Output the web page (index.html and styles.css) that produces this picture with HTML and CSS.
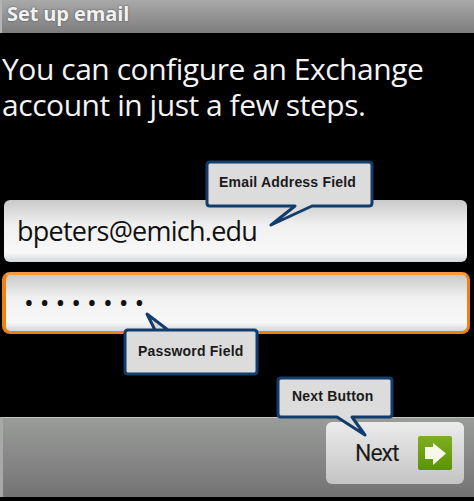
FILE: index.html
```html
<!DOCTYPE html>
<html lang="en">
<head>
    <meta charset="UTF-8">
    <meta name="viewport" content="width=device-width, initial-scale=1.0">
    <title>Set up email</title>
    <link rel="stylesheet" href="styles.css">
</head>
<body>
    <div class="screen">
        <div class="title_bar">Set up email</div>

        <p class="message">You can configure an Exchange account in just a few steps.</p>

        <div class="fields">
            <div class="field field_email">bpeters@emich.edu</div>
            <div class="field field_password">••••••••</div>
        </div>

        <div class="bottom_bar">
            <div class="next_button">
                <span class="next_label">Next</span>
                <span class="next_icon">
                    <svg width="34" height="34" viewBox="0 0 34 34">
                        <path d="M7 11H15V7L28 17.5L15 29V23H7Z" fill="#f6f8ec"/>
                    </svg>
                </span>
            </div>
        </div>

        <!-- callouts sit on top of everything -->
        <svg class="callouts" width="474" height="501" viewBox="0 0 474 501">
            <path class="bubble" d="M210 162H369Q372 162 372 165V203Q372 206 369 206H312L271 225L295 206H210Q207 206 207 203V165Q207 162 210 162Z"/>
            <text class="bubble_text" x="219" y="187">Email Address Field</text>

            <path class="bubble" d="M128 330H254Q257 330 257 333V371Q257 374 254 374H128Q125 374 125 371V333Q125 330 128 330H155L147 314L168 330Z"/>
            <text class="bubble_text" x="138" y="356">Password Field</text>

            <path class="bubble" d="M281 378H389Q392 378 392 381V414Q392 417 389 417H352L365 435L337 417H281Q278 417 278 414V381Q278 378 281 378Z"/>
            <text class="bubble_text" x="292" y="401">Next Button</text>
        </svg>
    </div>
</body>
</html>
```

FILE: styles.css
```css
*{
    margin: 0;
    padding: 0;
    box-sizing: border-box;
}
body{
    background-color: #000;
    font-family: "Open Sans", "Noto Sans", sans-serif;
}
.screen{
    position: relative;
    width: 474px;
    height: 501px;
    overflow: hidden;
    background-color: #000;
}
.title_bar{
    height: 33px;
    padding: 0 5px;
    background: linear-gradient(#a9a9a9, #7d7d7d);
    border-left: 2px solid #b5b5b5;
    color: #f2f2f2;
    font-size: 20px;
    font-weight: 700;
    line-height: 28px;
    letter-spacing: -0.1px;
    text-shadow: 0 0 2px #444;
}
.message{
    height: 167px;
    padding: 18px 2px 0;
    color: #f4f4f4;
    font-size: 30px;
    letter-spacing: -0.45px;
    line-height: 36px;
}
.fields{
    display: flex;
    flex-direction: column;
    gap: 10px;
    padding: 0 4px 0 2px;
}
.field{
    height: 62px;
    margin-left: 2px;
    margin-right: 3px;
    padding-left: 13px;
    border-radius: 6px;
    background: linear-gradient(#c9c9c9, #f0f0f0 40%, #f8f8f8 85%, #d2d8dc);
    color: #111;
    font-size: 27px;
    letter-spacing: -0.75px;
    line-height: 62px;
}
.field_password{
    height: 62px;
    margin-left: 0;
    margin-right: 0;
    padding-left: 18px;
    border: 3px solid #f08010;
    border-left-width: 4px;
    border-top-color: #f49a3c;
    border-radius: 8px;
    font-size: 26px;
    letter-spacing: 6px;
    line-height: 54px;
}
.bottom_bar{
    position: absolute;
    left: 0;
    right: 0;
    top: 417px;
    height: 80px;
    display: flex;
    justify-content: flex-end;
    padding: 4px 10px 0 0;
    background: linear-gradient(#9a9c9a, #737373);
    border-top: 1px solid #c4c4c4;
    border-left: 3px solid #a8a8a8;
}
.next_button{
    width: 138px;
    height: 62px;
    display: flex;
    align-items: center;
    padding: 0 12px 0 29px;
    justify-content: space-between;
    border-radius: 6px;
    background: linear-gradient(#ebebeb, #c4c4c4);
    color: #1c1c1c;
    font-family: Roboto, sans-serif;
    font-size: 23px;
    letter-spacing: -1px;
}
.next_icon{
    width: 34px;
    height: 34px;
    display: block;
    border-radius: 2px;
    background: linear-gradient(#7fae22, #5a9400);
}
.next_icon svg{
    display: block;
}
.callouts{
    position: absolute;
    top: 0;
    left: 0;
}
.bubble{
    fill: #dcdcdc;
    stroke: #123c6b;
    stroke-width: 3;
    stroke-linejoin: round;
}
.bubble_text{
    fill: #1a1a1a;
    font-family: "Liberation Sans", Arial, sans-serif;
    font-size: 14px;
    font-weight: 700;
    letter-spacing: 0.2px;
}
```
